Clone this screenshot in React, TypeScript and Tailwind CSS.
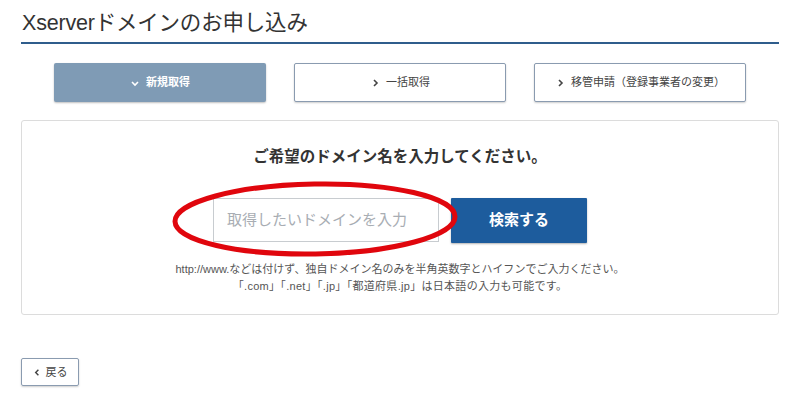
const font = "font-['Liberation_Sans','Noto_Sans_CJK_JP',sans-serif]";

function Chevron({ dir, className }: { dir: "down" | "right" | "left"; className?: string }) {
  const d =
    dir === "down" ? "M2 4 L5 7 L8 4" : dir === "right" ? "M4 2 L7 5 L4 8" : "M6 2 L3 5 L6 8";
  return (
    <svg viewBox="0 0 10 10" className={className} fill="none" stroke="currentColor" strokeWidth="1.6">
      <path d={d} />
    </svg>
  );
}

function Tab({ label, active }: { label: string; active?: boolean }) {
  return (
    <div
      className={
        active
          ? "w-[212px] h-[39px] flex items-center justify-center gap-1.5 bg-[#7f9bb5] text-white font-bold text-[11px] rounded-[2px] shadow-[0_1px_2px_rgba(0,0,0,0.25)]"
          : "w-[212px] h-[39px] flex items-center justify-center gap-1.5 bg-white text-[#444] text-[11px] border border-[#8a9bb0] rounded-[2px] shadow-[0_1px_2px_rgba(0,0,0,0.2)]"
      }
    >
      <Chevron dir={active ? "down" : "right"} className="w-[10px] h-[10px]" />
      <span>{label}</span>
    </div>
  );
}

export default function App() {
  return (
    <div className={`${font} w-[800px] h-[400px] bg-white px-[21px] pt-[10px] text-[#333]`}>
      {/* Title */}
      <h1 className="text-[21.5px] leading-[27px] tracking-[-0.2px] pl-[1px] pb-[5px] border-b-2 border-[#2f5d8c]">
        Xserverドメインのお申し込み
      </h1>

      {/* Tabs */}
      <div className="flex justify-center gap-[28px] mt-[19px]">
        <Tab label="新規取得" active />
        <Tab label="一括取得" />
        <Tab label="移管申請（登録事業者の変更）" />
      </div>

      {/* Search box */}
      <div className="mt-[18px] h-[195px] border border-[#dcdcdc] rounded-[3px] flex flex-col items-center pt-[26px]">
        <p className="text-[15.5px] font-bold leading-[20px] text-[#333]">ご希望のドメイン名を入力してください。</p>

        <div className="relative flex gap-[12px] mt-[31px]">
          <div className="w-[226px] h-[44px] border border-[#c8ccd0] flex items-center px-[13px] text-[15px] text-[#a8adb3]">
            取得したいドメインを入力
          </div>
          <button className="w-[136px] h-[45px] bg-[#1d5c9d] text-white font-bold text-[15px] rounded-[1px] shadow-[0_1px_2px_rgba(0,0,0,0.3)]">
            検索する
          </button>
          <svg className="absolute left-[-42px] top-[-17px] pointer-events-none" width="290" height="80" viewBox="0 0 290 80">
            <ellipse cx="144" cy="38" rx="140" ry="35" fill="none" stroke="#e0060d" strokeWidth="5" transform="rotate(-1 144 38)" />
          </svg>
        </div>

        <div className="mt-[18px] text-[11px] leading-[17px] text-[#555] text-center">
          <p>http://www.などは付けず、独自ドメイン名のみを半角英数字とハイフンでご入力ください。</p>
          <p className="tracking-[0.3px]">「.com」「.net」「.jp」「都道府県.jp」は日本語の入力も可能です。</p>
        </div>
      </div>

      {/* Back */}
      <div className="mt-[43px]">
        <button className="w-[58px] h-[28px] flex items-center justify-center gap-1 border border-[#8a9bb0] rounded-[2px] text-[11px] text-[#444] shadow-[0_1px_2px_rgba(0,0,0,0.2)]">
          <Chevron dir="left" className="w-[9px] h-[9px]" />
          <span>戻る</span>
        </button>
      </div>
    </div>
  );
}
